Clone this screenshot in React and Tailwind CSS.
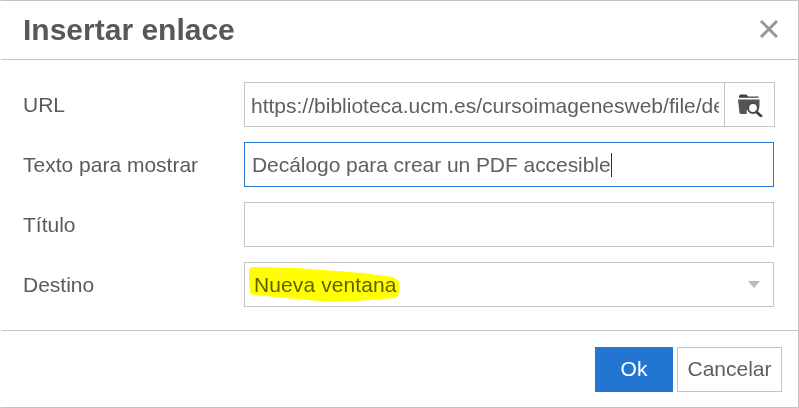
const font = "font-['Liberation_Sans',Arial,sans-serif]";

function FolderSearch() {
  return (
    <svg width="26" height="24" viewBox="0 0 26 24">
      <path d="M2 3.500 3 1.500h6.500l1.500 2h10.500v1.300H2z" fill="#3f3f3f" />
      <path d="M1 6.500h21.500v8a7.500 7.500 0 0 0-12.800 6.500H3.500L2.500 20z" fill="#555" />
      <circle cx="16" cy="15" r="5" fill="#fff" stroke="#4c4c4c" strokeWidth="2.200" />
      <path d="m19.500 19 4.500 4" stroke="#3f3f3f" strokeWidth="2.800" strokeLinecap="round" />
    </svg>
  );
}

function Row({ label, children }) {
  return (
    <div className="flex items-center h-[45px]">
      <div className="w-[221px] shrink-0 text-[#5a5a5a]">{label}</div>
      {children}
    </div>
  );
}

export default function App() {
  return (
    <div className={`${font} w-[799px] h-[408px] bg-white text-[21px] text-[#5f5f5f] overflow-hidden`}>
      <div className="w-full h-full border border-[#c4c4c4] border-l-white flex flex-col">
        {/* cabecera */}
        <div className="h-[59px] shrink-0 flex items-center justify-between pl-[22px] pr-[20px] pb-[2px] border-b border-[#c4c4c4]">
          <h1 className="text-[30px] font-bold text-[#585858]">Insertar enlace</h1>
          <svg width="18" height="18" viewBox="0 0 18 18" stroke="#979797" strokeWidth="3">
            <path d="M1 1l16 16M17 1 1 17" />
          </svg>
        </div>

        {/* formulario */}
        <div className="flex-1 flex flex-col gap-[15px] pt-[22px] pl-[22px]">
          <Row label="URL">
            <div className="w-[531px] h-[45px] flex border border-[#c4c4c4]">
              <div className="flex-1 min-w-0 pl-[6px] pr-[5px] leading-[45px] whitespace-nowrap">
                <div className="overflow-hidden">https://biblioteca.ucm.es/cursoimagenesweb/file/decalogo.pdf</div>
              </div>
              <div className="w-[50px] shrink-0 border-l border-[#c4c4c4] flex items-center justify-center">
                <FolderSearch />
              </div>
            </div>
          </Row>
          <Row label="Texto para mostrar">
            <div className="w-[530px] h-[45px] border border-[#2276d2] pl-[7px] flex items-center">
              <span className="tracking-[-0.06px]">Decálogo para crear un PDF accesible</span>
              <span className="w-px h-[24px] bg-[#333]" />
            </div>
          </Row>
          <Row label="Título">
            <div className="w-[530px] h-[45px] border border-[#c4c4c4]" />
          </Row>
          <Row label="Destino">
            <div className="relative w-[530px] h-[45px] border border-[#c4c4c4] flex items-center justify-between pl-[9px] pr-[13px]">
              <svg className="absolute left-[3px] top-[3px]" width="156" height="38" viewBox="0 0 156 38">
                <path d="M1 3 4 1l45 1 66 5 30 4 6 4 1 7-2 8-3 2-40 3-25 1-33-3-44-4-3-3-1-12z" fill="#ffff00" />
              </svg>
              <span className="relative mix-blend-multiply tracking-[0.1px]">Nueva ventana</span>
              <span className="w-0 h-0 border-x-[6px] border-x-transparent border-t-[7px] border-t-[#b4bcc4]" />
            </div>
          </Row>
        </div>

        {/* pie */}
        <div className="h-[77px] shrink-0 flex items-center justify-end gap-1 pr-4 border-t border-[#c4c4c4]">
          <button className="w-[78px] h-[45px] bg-[#2276d2] text-white">Ok</button>
          <button className="w-[105px] h-[45px] bg-white border border-[#c4c4c4] text-[#5f5f5f]">Cancelar</button>
        </div>
      </div>
    </div>
  );
}
